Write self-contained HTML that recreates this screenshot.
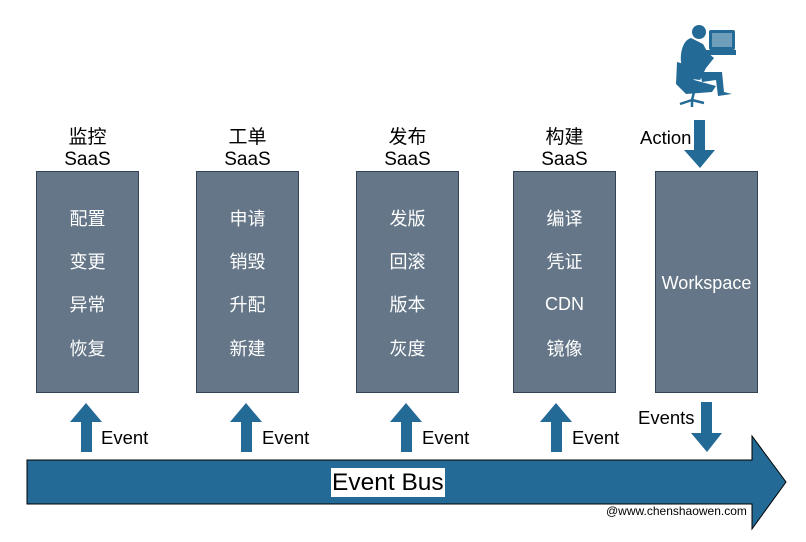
<!DOCTYPE html>
<html><head><meta charset="utf-8"><style>
body{margin:0;width:806px;height:542px;background:#fff;position:relative;overflow:hidden;font-family:"Liberation Sans","Noto Sans CJK SC",sans-serif}
.t{position:absolute;text-align:center;font-size:19px;line-height:22px;color:#000}
.box{position:absolute;top:171px;width:101px;height:220px;background:#647687;border:1px solid #314354;color:#fff;font-size:18px}
.box div{position:absolute;left:0;right:0;text-align:center;line-height:22px}
.ev{position:absolute;font-size:18.5px;line-height:22px;color:#000}
</style></head><body>
<div class="t" style="left:37px;width:101px;top:127px">监控<br>SaaS</div>
<div class="t" style="left:197px;width:101px;top:127px">工单<br>SaaS</div>
<div class="t" style="left:357px;width:101px;top:127px">发布<br>SaaS</div>
<div class="t" style="left:514px;width:101px;top:127px">构建<br>SaaS</div>
<div class="box" style="left:36px"><div style="top:36px">配置</div><div style="top:79px">变更</div><div style="top:122px">异常</div><div style="top:166px">恢复</div></div>
<div class="box" style="left:196px"><div style="top:36px">申请</div><div style="top:79px">销毁</div><div style="top:122px">升配</div><div style="top:166px">新建</div></div>
<div class="box" style="left:356px"><div style="top:36px">发版</div><div style="top:79px">回滚</div><div style="top:122px">版本</div><div style="top:166px">灰度</div></div>
<div class="box" style="left:513px"><div style="top:36px">编译</div><div style="top:79px">凭证</div><div style="top:121px">CDN</div><div style="top:166px">镜像</div></div>
<div class="box" style="left:655px"><div style="top:100px">Workspace</div></div>
<svg width="806" height="542" style="position:absolute;left:0;top:0">
<g fill="#236a96">
<polygon points="81,452 92,452 92,422 102,422 86,403 70,422 81,422"/>
<polygon points="241,452 252,452 252,422 262,422 246,403 230,422 241,422"/>
<polygon points="401,452 412,452 412,422 422,422 406,403 390,422 401,422"/>
<polygon points="551,452 562,452 562,422 572,422 556,403 540,422 551,422"/>
<polygon points="701,402 712,402 712,433 722,433 707,452 691,433 701,433"/>
<polygon points="694,120 705,120 705,150 715,150 700,168 684,150 694,150"/>
<polygon points="27,460 752,460 752,436 786,482 752,529 752,504 27,504" stroke="#000" stroke-width="1"/>
<circle cx="699" cy="32" r="7"/>
<path d="M691 38 C684 40 680 50 681 62 L684 78 L700 80 L706 68 L714 58 L708 53 L703 44 Z"/>
<path d="M677 62 L676 84 L686 94 L712 92 L716 86 L694 80 L684 64 Z"/>
<path d="M700 72 L722 72 L724 92 L732 94 L718 96 L716 80 L702 82 Z"/>
<rect x="709" y="30" width="26" height="20" rx="2"/>
<rect x="706" y="50" width="30" height="5"/>
<path d="M694 92 L692 100 M692 100 L680 104 M692 100 L704 103 M692 100 L692 107" stroke="#236a96" stroke-width="2.5" fill="none"/>
</g>
<rect x="712" y="33" width="20" height="14" fill="#fff" opacity=".35"/>
</svg>
<div class="ev" style="left:101px;top:427px">Event</div>
<div class="ev" style="left:262px;top:427px">Event</div>
<div class="ev" style="left:422px;top:427px">Event</div>
<div class="ev" style="left:572px;top:427px">Event</div>
<div class="ev" style="left:638px;top:407px">Events</div>
<div class="ev" style="left:640px;top:127px">Action</div>
<div style="position:absolute;left:331px;top:468px;background:#fff;font-size:24.5px;line-height:29px;padding:0 1px">Event Bus</div>
<div style="position:absolute;left:606px;top:504px;font-size:12px;line-height:14px;color:#000">@www.chenshaowen.com</div>
</body></html>
